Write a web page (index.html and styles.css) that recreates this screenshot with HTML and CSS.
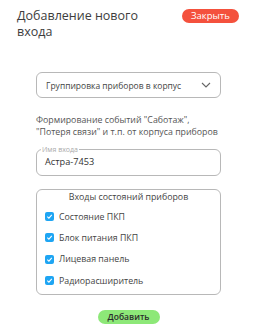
FILE: index.html
```html
<!DOCTYPE html>
<html lang="ru">
<head>
    <meta charset="UTF-8">
    <meta name="viewport" content="width=device-width, initial-scale=1.0">
    <title>Добавление нового входа</title>
    <link rel="stylesheet" href="styles.css">
</head>
<body>
    <div class="dialog">
        <div class="dialog-header">
            <h1 class="dialog-title">Добавление нового входа</h1>
            <button class="btn-close" type="button">Закрыть</button>
        </div>
        <form class="entry-form">
            <div class="select-box">
                <span>Группировка приборов в корпус</span>
                <svg class="chevron" width="10" height="6" viewBox="0 0 10 6">
                    <path d="M1 1 L5 5 L9 1" fill="none" stroke="#666" stroke-width="1.1"/>
                </svg>
            </div>
            <p class="hint">Формирование событий "Саботаж",<br>"Потеря связи" и т.п. от корпуса приборов</p>
            <fieldset class="text-field">
                <legend>Имя входа</legend>
                <span class="field-value">Астра-7453</span>
            </fieldset>
            <div class="group-box">
                <div class="group-title">Входы состояний приборов</div>
                <label class="check-row"><span class="check"><svg width="7" height="7" viewBox="0 0 7 7"><path d="M1.3 3.6 L2.9 5.1 L5.8 1.8" fill="none" stroke="#fff" stroke-width="1.1"/></svg></span>Состояние ПКП</label>
                <label class="check-row"><span class="check"><svg width="7" height="7" viewBox="0 0 7 7"><path d="M1.3 3.6 L2.9 5.1 L5.8 1.8" fill="none" stroke="#fff" stroke-width="1.1"/></svg></span>Блок питания ПКП</label>
                <label class="check-row"><span class="check"><svg width="7" height="7" viewBox="0 0 7 7"><path d="M1.3 3.6 L2.9 5.1 L5.8 1.8" fill="none" stroke="#fff" stroke-width="1.1"/></svg></span>Лицевая панель</label>
                <label class="check-row"><span class="check"><svg width="7" height="7" viewBox="0 0 7 7"><path d="M1.3 3.6 L2.9 5.1 L5.8 1.8" fill="none" stroke="#fff" stroke-width="1.1"/></svg></span>Радиорасширитель</label>
            </div>
            <div class="actions">
                <button class="btn-add" type="submit">Добавить</button>
            </div>
        </form>
    </div>
</body>
</html>
```
FILE: styles.css
```css
body {
    margin: 0;
    background: #fff;
    font-family: "Open Sans", "Noto Sans", sans-serif;
    color: #444;
}
.dialog {
    width: 256px;
}
.dialog-header {
    display: flex;
    justify-content: space-between;
    align-items: flex-start;
    padding: 8px 17px 0 17px;
}
.dialog-title {
    margin: 0;
    width: 150px;
    font-size: 12.5px;
    font-weight: 400;
    line-height: 15.5px;
    color: #3d3d3d;
}
.btn-close {
    margin-top: 1px;
    width: 57px;
    height: 14px;
    padding: 0;
    border: none;
    border-radius: 7px;
    background: #f4513d;
    color: #fff;
    font-family: inherit;
    font-size: 9.5px;
    line-height: 14px;
}
.entry-form {
    margin: 33px 0 0 36px;
    width: 185px;
}
.select-box {
    box-sizing: border-box;
    height: 26px;
    display: flex;
    align-items: center;
    justify-content: space-between;
    padding: 0 9px 0 9px;
    border: 1px solid #b8b8b8;
    border-radius: 6px;
    font-size: 8.5px;
    color: #444;
}
.hint {
    margin: 17px 0 0 0;
    font-size: 8.8px;
    line-height: 11.5px;
    white-space: nowrap;
    color: #555;
}
.text-field {
    box-sizing: border-box;
    margin: 7px 0 0 0;
    height: 31px;
    padding: 0 8px;
    border: 1px solid #b8b8b8;
    border-radius: 6px;
}
.text-field legend {
    padding: 0 1px;
    margin-left: -4px;
    font-size: 7px;
    line-height: 9px;
    color: #aaa;
}
.field-value {
    display: block;
    margin-top: 1px;
    font-size: 9.2px;
    color: #333;
}
.group-box {
    box-sizing: border-box;
    margin-top: 13px;
    height: 106px;
    padding: 1px 0 0 8px;
    border: 1px solid #b8b8b8;
    border-radius: 6px;
}
.group-title {
    text-align: center;
    padding-right: 8px;
    font-size: 8.8px;
    line-height: 12px;
    color: #444;
}
.check-row {
    display: flex;
    align-items: center;
    gap: 5px;
    height: 21.3px;
    font-size: 8.8px;
    color: #444;
}
.check-row:first-of-type {
    margin-top: 3px;
}
.check {
    width: 9px;
    height: 9px;
    border-radius: 2px;
    background: #1ea5f3;
    display: flex;
    align-items: center;
    justify-content: center;
}
.actions {
    display: flex;
    justify-content: center;
    margin-top: 15px;
}
.btn-add {
    width: 62px;
    height: 14px;
    padding: 0;
    border: none;
    border-radius: 7px;
    background: #8de878;
    color: #2b2b2b;
    font-family: inherit;
    font-size: 8.5px;
    font-weight: 600;
    line-height: 14px;
}
```
